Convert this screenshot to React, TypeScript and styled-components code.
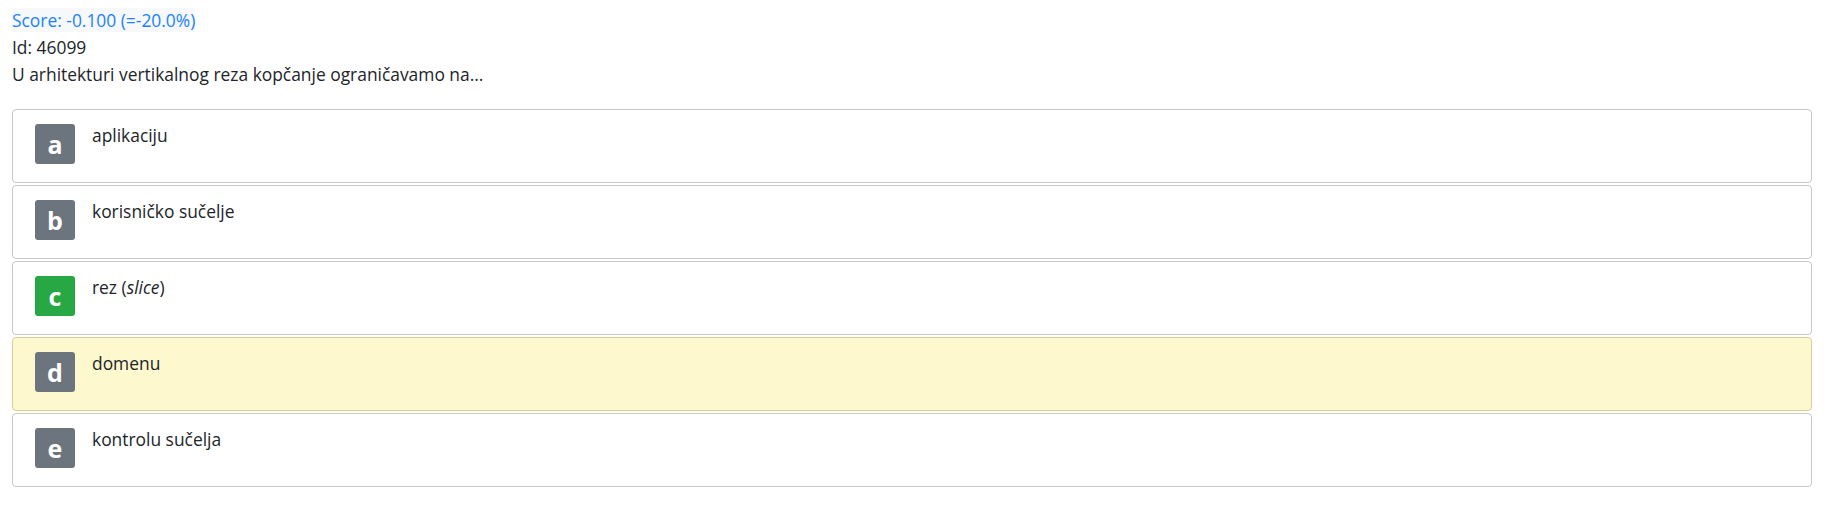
import styled, { createGlobalStyle } from "styled-components";

const GlobalStyle = createGlobalStyle`
  body {
    margin: 0;
    background: #ffffff;
    font-family: "Open Sans", "Noto Sans", sans-serif;
    color: #212529;
  }
`;

const Page = styled.div`
  padding: 7px 15px 0 12px;
  font-size: 17.4px;
  line-height: 27px;
`;

const Line = styled.div``;

const Score = styled.span`
  color: #1a82ff;
  background-color: #f6f8fa;
`;

const Answers = styled.div`
  margin-top: 21px;
  display: flex;
  flex-direction: column;
  gap: 2px;
`;

const Answer = styled.div<{ $marked?: boolean }>`
  display: flex;
  align-items: flex-start;
  box-sizing: border-box;
  height: 74px;
  padding: 13px 22px;
  border: 1px solid ${(p) => (p.$marked ? "#d9cf92" : "#c8c8c8")};
  border-radius: 4px;
  background-color: ${(p) => (p.$marked ? "#fdf8cd" : "#ffffff")};
`;

const Badge = styled.div<{ $correct?: boolean }>`
  flex: none;
  width: 40px;
  height: 40px;
  margin-top: 1px;
  border-radius: 3px;
  background-color: ${(p) => (p.$correct ? "#28a745" : "#6c757d")};
  color: #ffffff;
  font-weight: 700;
  font-size: 25px;
  line-height: 40px;
  text-align: center;
`;

const AnswerText = styled.div`
  margin-left: 17px;
  line-height: 24px;
`;

const answers = [
  { key: "a", text: <>aplikaciju</> },
  { key: "b", text: <>korisničko sučelje</> },
  { key: "c", text: <>rez (<i>slice</i>)</>, correct: true },
  { key: "d", text: <>domenu</>, marked: true },
  { key: "e", text: <>kontrolu sučelja</> },
];

export default function App() {
  return (
    <Page>
      <GlobalStyle />
      <Line>
        <Score>Score: -0.100 (=-20.0%)</Score>
      </Line>
      <Line>Id: 46099</Line>
      <Line>U arhitekturi vertikalnog reza kopčanje ograničavamo na...</Line>
      <Answers>
        {answers.map((a) => (
          <Answer key={a.key} $marked={a.marked}>
            <Badge $correct={a.correct}>{a.key}</Badge>
            <AnswerText>{a.text}</AnswerText>
          </Answer>
        ))}
      </Answers>
    </Page>
  );
}
